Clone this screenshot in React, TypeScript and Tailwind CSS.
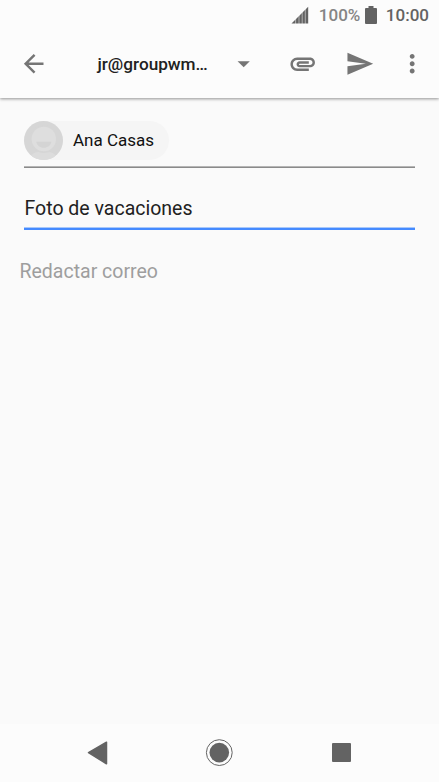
import type { ReactNode } from "react";

function Icon({ children, className = "" }: { children: ReactNode; className?: string }) {
  return (
    <svg viewBox="0 0 24 24" fill="currentColor" className={`size-[29.4px] shrink-0 ${className}`}>
      {children}
    </svg>
  );
}

function StatusBar() {
  return (
    <div className="flex h-[30px] items-center justify-end pr-[10px] text-[17px] font-medium leading-[30px] text-[#636363]">
      <svg viewBox="0 0 18 18" className="mr-[10px] h-[18px] w-[18px]" fill="#636363">
        <path d="M.5 17.5 17.2.8v16.7z" />
        <path d="M4.6 12v6M8 9v9M11.2 6v12M14.3 3v15" stroke="#fcfcfc" strokeWidth="0.5" />
      </svg>
      <span className="text-[#858585]">100%</span>
      <svg viewBox="0 0 12 18" className="ml-[4.5px] mr-[5px] h-[18px] w-3" fill="#636363">
        <path d="M3.5 0h5v2H11q1 0 1 1v14q0 1-1 1H1q-1 0-1-1V3q0-1 1-1h2.5z" />
      </svg>
      <span className="ml-[4px]">10:00</span>
    </div>
  );
}

function Toolbar() {
  return (
    <div className="flex h-[67px] items-center text-[#757575]">
      <Icon className="ml-[19.4px]">
        <path d="M20 11H7.83l5.59-5.59L12 4l-8 8 8 8 1.41-1.41L7.83 13H20v-2z" />
      </Icon>
      <h1 className="ml-[48.7px] w-[132px] text-[17.2px] font-medium leading-6 text-[#212121]">jr@groupwm…</h1>
      <Icon>
        <path d="M7 10l5 5 5-5z" />
      </Icon>
      <Icon className="ml-[29.2px]">
        <path d="M2 12.5C2 9.46 4.46 7 7.5 7H18c2.21 0 4 1.79 4 4s-1.79 4-4 4H9.5C8.12 15 7 13.88 7 12.5S8.12 10 9.5 10H17v2H9.41c-.55 0-.55 1 0 1H18c1.1 0 2-.9 2-2s-.9-2-2-2H7.5C5.57 9 4 10.57 4 12.5S5.57 16 7.5 16H17v2H7.5C4.46 18 2 15.54 2 12.5z" />
      </Icon>
      <Icon className="ml-[27.4px]">
        <path d="M2.01 21L23 12 2.01 3 2 10l15 2-15 2z" />
      </Icon>
      <Icon className="ml-[23.2px]">
        <path
          transform="translate(.4 0)"
          d="M12 8c1.1 0 2-.9 2-2s-.9-2-2-2-2 .9-2 2 .9 2 2 2zm0 2c-1.1 0-2 .9-2 2s.9 2 2 2 2-.9 2-2-.9-2-2-2zm0 6c-1.1 0-2 .9-2 2s.9 2 2 2 2-.9 2-2-.9-2-2-2z"
        />
      </Icon>
    </div>
  );
}

function RecipientChip() {
  return (
    <div className="flex h-[39px] w-[145px] items-center rounded-full bg-[#f5f5f5]">
      <svg viewBox="0 0 39 39" className="size-[39px] shrink-0">
        <clipPath id="avatar">
          <circle cx="19.5" cy="19.5" r="19.5" />
        </clipPath>
        <g clipPath="url(#avatar)">
          <rect width="39" height="39" fill="#d6d6d6" />
          <path d="M5 39c1-5 5-8 10-8h9c5 0 9 3 10 8z" fill="#dcdcdc" />
          <circle cx="19.8" cy="18" r="14" fill="#d6d6d6" />
          <circle cx="19.8" cy="18" r="12.2" fill="#dedede" />
          <path d="M12.2 20.8h15.2c-.7 3.7-3.6 6-7.6 6s-6.9-2.3-7.6-6z" fill="#d4d4d4" />
        </g>
      </svg>
      <span className="mb-[2px] ml-[10px] whitespace-nowrap text-[17px] leading-6 text-[#111]">Ana Casas</span>
    </div>
  );
}

function NavBar() {
  return (
    <nav className="flex h-[58px] items-center bg-[#fcfcfc] text-[#636363]">
      <svg viewBox="0 0 22 24" className="ml-[87px] h-6 w-[22px]" fill="currentColor">
        <path d="M1.5 11.6 19.5 1.2v21.6z" stroke="currentColor" strokeWidth="1.5" strokeLinejoin="round" />
      </svg>
      <svg viewBox="0 0 28 28" className="ml-[96px] size-7" fill="currentColor">
        <circle cx="14.3" cy="13.6" r="9.8" />
        <circle cx="14.3" cy="13.6" r="12.9" fill="none" stroke="currentColor" strokeWidth="1" />
      </svg>
      <div className="mb-px ml-[99px] size-[19px] rounded-[1px] bg-[#636363]" />
    </nav>
  );
}

export default function App() {
  return (
    <div className="flex h-[782px] w-[439px] flex-col overflow-hidden bg-[#fafafa] font-['Roboto',sans-serif]">
      <header className="z-10 h-[98px] shrink-0 bg-[#fcfcfc] shadow-[0_1px_3px_rgba(0,0,0,0.42)]">
        <StatusBar />
        <Toolbar />
      </header>

      <main className="flex-1">
        <div className="mx-6 h-[68px] pt-[23px]">
          <RecipientChip />
        </div>
        <div className="mx-6 h-px bg-[#b5b5b5]" />
        <div className="mx-6 h-px bg-[#8a8a8a]" />
        <div className="mx-6 h-[59px] pl-[0.5px] pt-[29px] text-[19.5px] leading-6 text-[#212121]">
          Foto de vacaciones
        </div>
        <div className="mx-6 h-px bg-[#a8c8fa]" />
        <div className="mx-6 h-[2px] bg-[#448aff]" />
        <p className="ml-[19.5px] mt-[30px] text-[19.5px] leading-6 text-[#9e9e9e]">Redactar correo</p>
      </main>

      <NavBar />
    </div>
  );
}
